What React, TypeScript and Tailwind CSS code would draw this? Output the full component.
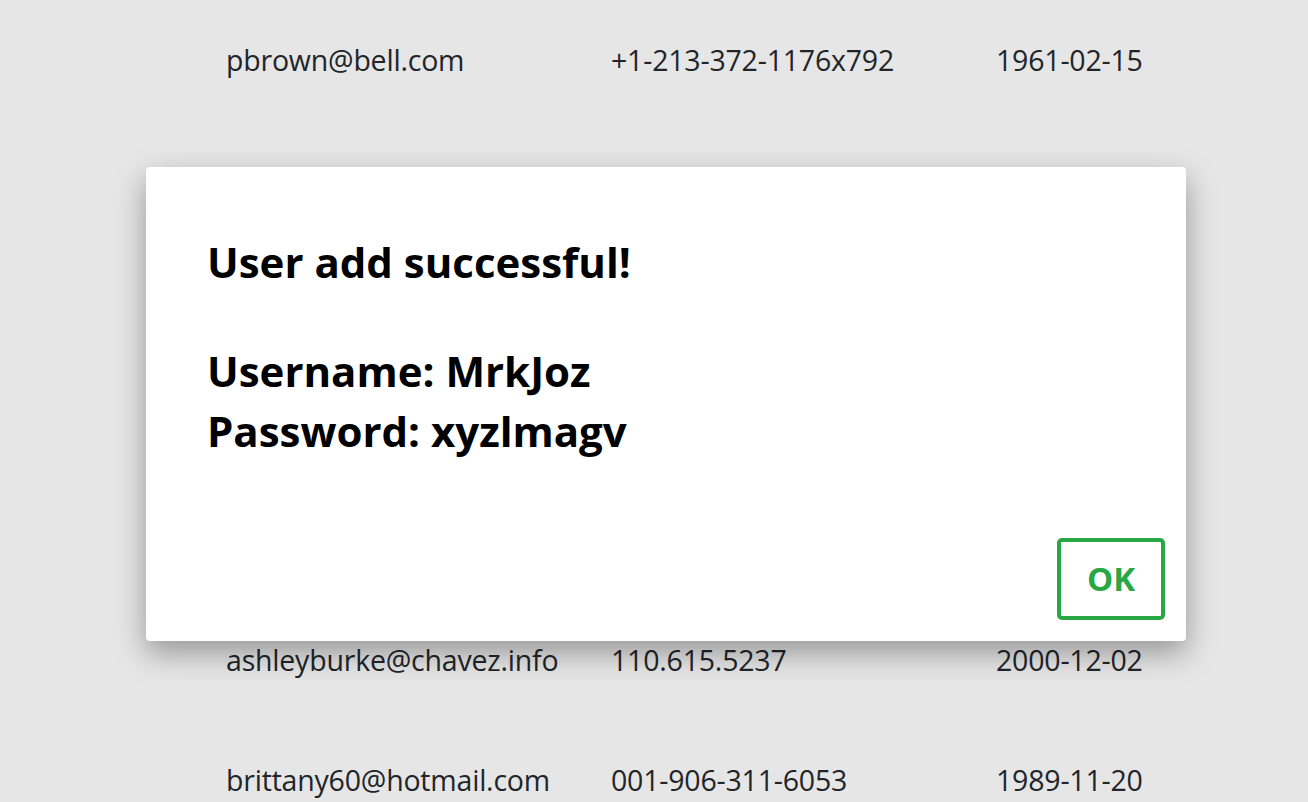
import React from "react";

const rows = [
  ["pbrown@bell.com", "+1-213-372-1176x792", "1961-02-15"],
  ["jsmith@example.com", "555-123-4567", "1975-06-11"],
  ["mwilliams@gmail.com", "(312)555-0198", "1982-03-27"],
  ["kjohnson@yahoo.com", "+1-646-555-0133", "1990-08-09"],
  ["dlee@outlook.com", "415.555.0172", "1968-12-30"],
  ["ashleyburke@chavez.info", "110.615.5237", "2000-12-02"],
  ["brittany60@hotmail.com", "001-906-311-6053", "1989-11-20"],
];

export default function App() {
  return (
    <div
      className="relative h-[802px] w-[1308px] overflow-hidden bg-[#e6e6e6]"
      style={{ fontFamily: '"Open Sans", "Noto Sans", sans-serif' }}
    >
      <div className="flex flex-col pl-[226px] text-[#212529]">
        {rows.map((r, i) => (
          <div key={i} className="grid h-[120px] grid-cols-[385px_385px_200px] items-center text-[28.5px] tracking-[-0.2px]">
            <div>{r[0]}</div>
            <div>{r[1]}</div>
            <div>{r[2]}</div>
          </div>
        ))}
      </div>

      <div className="absolute left-[146px] top-[167px] flex h-[474px] w-[1040px] flex-col rounded-[4px] bg-white shadow-[0_12px_30px_rgba(0,0,0,0.35)]">
        <div className="px-[61px] pt-[65px] text-[42px] font-bold leading-[60px] text-black">
          <div className="mb-[49px]">User add successful!</div>
          <div>Username: MrkJoz</div>
          <div>Password: xyzlmagv</div>
        </div>
        <div className="mt-auto flex justify-end p-[21px]">
          <button className="flex h-[82px] w-[108px] items-center justify-center rounded-[5px] border-4 border-[#28a745] bg-white text-[33px] font-bold text-[#28a745]">
            OK
          </button>
        </div>
      </div>
    </div>
  );
}
